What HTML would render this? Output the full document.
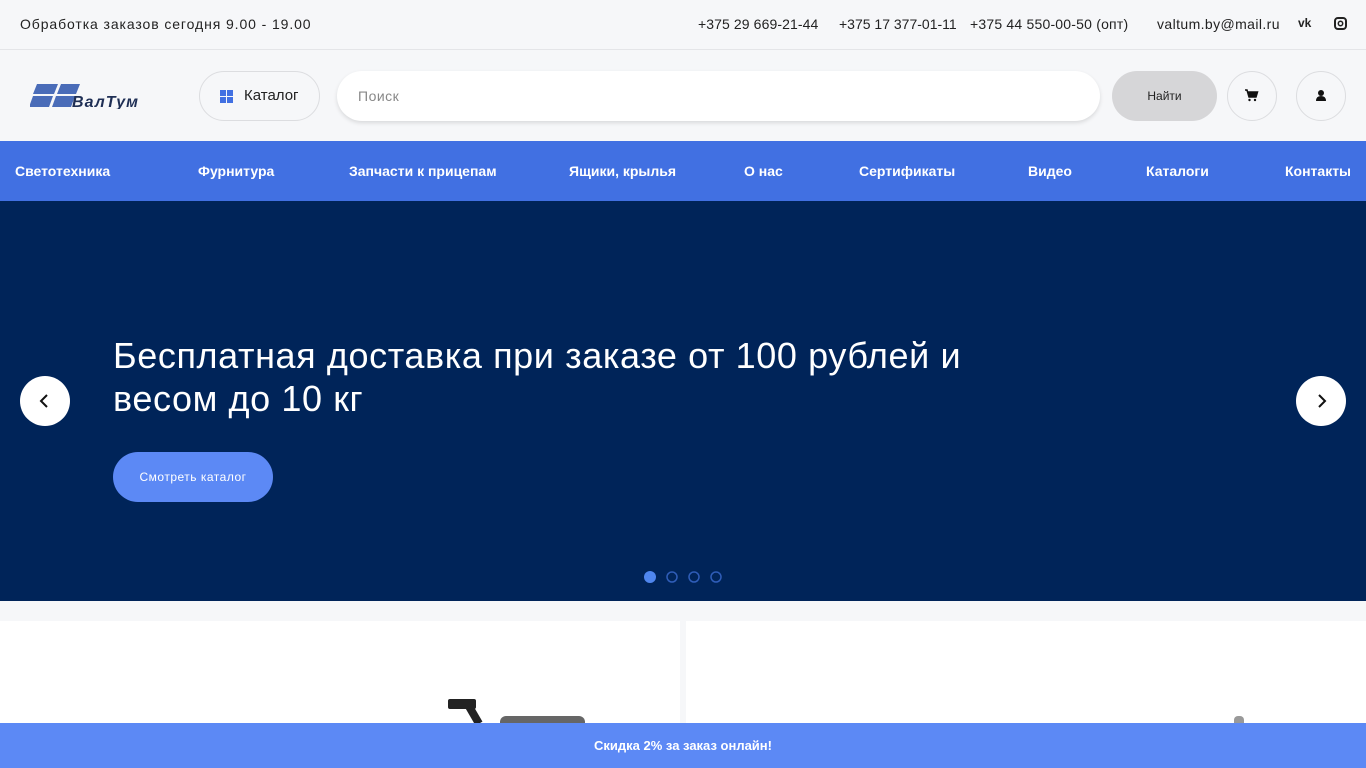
<!DOCTYPE html>
<html><head><meta charset="utf-8"><style>
*{margin:0;padding:0;box-sizing:border-box}
body{width:1366px;height:768px;overflow:hidden;background:#f6f7f9;font-family:"Liberation Sans",sans-serif;position:relative}
.top{height:50px;border-bottom:1px solid #e4e5e8;position:relative;font-size:14px;color:#222;letter-spacing:.5px}
.top span{position:absolute;top:16px}
.hdr{height:91px;position:relative}
.nav{height:60px;background:#4170e2;position:relative;color:#fff;font-size:14px;font-weight:bold}
.nav span{position:absolute;top:22px}
.hero{height:400px;background:#002459;position:relative;color:#fff}
.circ{position:absolute;width:50px;height:50px;border-radius:50%;border:1px solid #dcdde0;background:#f6f7f9}
.bar{position:absolute;left:0;top:723px;width:1366px;height:45px;background:#5c89f5;color:#fff;text-align:center;font-size:13px;font-weight:bold;line-height:45px}
</style></head><body>
<div class="top">
<span style="left:20px;letter-spacing:.9px">Обработка заказов сегодня 9.00 - 19.00</span>
<span style="left:698px;letter-spacing:.1px">+375 29 669-21-44</span>
<span style="left:839px;letter-spacing:0">+375 17 377-01-11</span>
<span style="left:970px;letter-spacing:.2px">+375 44 550-00-50 (опт)</span>
<span style="left:1157px;letter-spacing:.4px">valtum.by@mail.ru</span>
<span style="left:1298px;font-weight:bold;font-size:12px;letter-spacing:0">vk</span>
<svg style="position:absolute;left:1334px;top:17px" width="13" height="13"><rect x="1" y="1" width="11" height="11" rx="3" fill="none" stroke="#222" stroke-width="2"/><circle cx="6.5" cy="6.5" r="2.2" fill="none" stroke="#222" stroke-width="1.5"/></svg>
</div>
<div class="hdr">
<svg style="position:absolute;left:30px;top:33px" width="112" height="26"><polygon points="7,1 28,1 24,11 3,11" fill="#4a6cb8"/><polygon points="31,1 50,1 46,11 27,11" fill="#4a6cb8"/><polygon points="3,13 23,13 19,24 -1,24" fill="#4a6cb8"/><polygon points="26,13 45,13 41,24 22,24" fill="#4a6cb8"/><text x="42" y="24" font-family="Liberation Sans" font-weight="bold" font-style="italic" font-size="16" fill="#1f2f55" textLength="66">ВалТум</text></svg>
<div style="position:absolute;left:199px;top:21px;width:121px;height:50px;border:1px solid #dcdde0;border-radius:25px;font-size:15px;line-height:48px;padding-left:44px;color:#222">Каталог
<div style="position:absolute;left:20px;top:18px;width:13px;height:13px;background:linear-gradient(#f6f7f9,#f6f7f9) 6px 0/1px 13px no-repeat,linear-gradient(90deg,#f6f7f9,#f6f7f9) 0 6px/13px 1px no-repeat,#4170e2"></div></div>
<div style="position:absolute;left:337px;top:21px;width:763px;height:50px;background:#fff;border-radius:25px;box-shadow:0 2px 4px rgba(0,0,0,.12);font-size:14px;color:#888;line-height:50px;padding-left:21px;letter-spacing:.5px">Поиск</div>
<div style="position:absolute;left:1112px;top:21px;width:105px;height:50px;background:#d6d6d8;border-radius:25px;font-size:12px;line-height:50px;text-align:center;color:#222">Найти</div>
<div class="circ" style="left:1227px;top:21px"><svg width="48" height="48"><path d="M17 18h2l2 7h7l1.5-5H20" fill="#111" stroke="#111" stroke-width="1.5"/><circle cx="21.5" cy="28" r="1.2" fill="#111"/><circle cx="27" cy="28" r="1.2" fill="#111"/></svg></div>
<div class="circ" style="left:1296px;top:21px"><svg width="48" height="48"><circle cx="24" cy="21" r="3" fill="#111"/><path d="M19 29q0-5 5-5t5 5z" fill="#111"/></svg></div>
</div>
<div class="nav">
<span style="left:15px">Светотехника</span><span style="left:198px">Фурнитура</span><span style="left:349px">Запчасти к прицепам</span><span style="left:569px">Ящики, крылья</span><span style="left:744px">О нас</span><span style="left:859px">Сертификаты</span><span style="left:1028px">Видео</span><span style="left:1146px">Каталоги</span><span style="left:1285px">Контакты</span>
</div>
<div class="hero">
<div style="position:absolute;left:113px;top:133px;font-size:36px;line-height:43px;width:950px;letter-spacing:.6px">Бесплатная доставка при заказе от 100 рублей и весом до 10 кг</div>
<div style="position:absolute;left:113px;top:251px;width:160px;height:50px;background:#5c89f5;border-radius:25px;font-size:12px;line-height:50px;text-align:center;letter-spacing:.5px">Смотреть каталог</div>
<div style="position:absolute;left:20px;top:175px;width:50px;height:50px;border-radius:50%;background:#fff"><svg width="50" height="50"><path d="M27 19l-6 6 6 6" stroke="#111" stroke-width="2" fill="none"/></svg></div>
<div style="position:absolute;left:1296px;top:175px;width:50px;height:50px;border-radius:50%;background:#fff"><svg width="50" height="50"><path d="M23 19l6 6-6 6" stroke="#111" stroke-width="2" fill="none"/></svg></div>
<svg style="position:absolute;left:640px;top:369px" width="90" height="16"><circle cx="10" cy="7" r="6" fill="#4f86ee"/><circle cx="32" cy="7" r="5" fill="none" stroke="#2f5db8" stroke-width="1.5"/><circle cx="54" cy="7" r="5" fill="none" stroke="#2f5db8" stroke-width="1.5"/><circle cx="76" cy="7" r="5" fill="none" stroke="#2f5db8" stroke-width="1.5"/></svg>
</div>
<div style="position:absolute;left:0;top:621px;width:680px;height:147px;background:#fff"></div>
<div style="position:absolute;left:686px;top:621px;width:680px;height:147px;background:#fff"></div>
<div style="position:absolute;left:448px;top:699px;width:28px;height:10px;background:#222;border-radius:2px"></div>
<div style="position:absolute;left:470px;top:705px;width:8px;height:20px;background:#222;transform:rotate(-30deg)"></div>
<div style="position:absolute;left:500px;top:716px;width:85px;height:10px;background:#666;border-radius:6px 6px 0 0"></div>
<div style="position:absolute;left:1234px;top:716px;width:10px;height:8px;background:#999;border-radius:4px 4px 0 0"></div>
<div class="bar">Скидка 2% за заказ онлайн!</div>
</body></html>
